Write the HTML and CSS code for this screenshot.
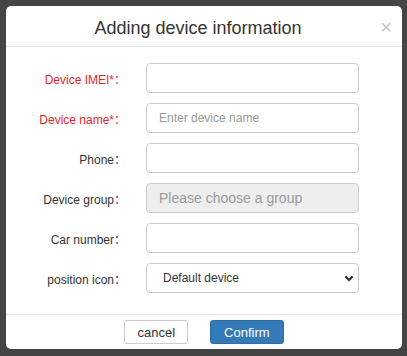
FILE: index.html
```
<!DOCTYPE html>
<html lang="en">
<head>
  <meta charset="UTF-8" />
  <title>Adding device information</title>
  <link rel="stylesheet" href="styles.css">
</head>
<body>
  <div class="modal">
    <div class="modal-header">
      <h4>Adding device information</h4>
      <span class="close">×</span>
    </div>
    <form class="modal-body">
      <div class="row">
        <label class="required">Device IMEI*：</label>
        <input type="text" />
      </div>
      <div class="row">
        <label class="required">Device name*：</label>
        <input type="text" placeholder="Enter device name" />
      </div>
      <div class="row">
        <label>Phone：</label>
        <input type="text" />
      </div>
      <div class="row">
        <label>Device group：</label>
        <input type="text" class="group" placeholder="Please choose a group" readonly />
      </div>
      <div class="row">
        <label>Car number：</label>
        <input type="text" />
      </div>
      <div class="row">
        <label>position icon：</label>
        <div class="select-wrap">
          <select>
            <option>Default device</option>
          </select>
          <svg class="chevron" width="10" height="7" viewBox="0 0 10 7">
            <path d="M1.4 1.4 L5 5 L8.6 1.4" fill="none" stroke="#333" stroke-width="2.2" />
          </svg>
        </div>
      </div>
    </form>
    <div class="modal-footer">
      <button class="btn">cancel</button>
      <button class="btn primary">Confirm</button>
    </div>
  </div>
</body>
</html>
```
FILE: styles.css
```
body {
  margin: 0;
  padding: 6px 5px 7px 6px;
  background-color: #444;
  font-family: "Liberation Sans", Arial, "Noto Sans CJK SC", sans-serif;
  color: #333;
}
.modal {
  background: white;
  border-radius: 5px;
  width: 396px;
  height: 343px;
  display: flex;
  flex-direction: column;
}
.modal-header {
  position: relative;
  height: 41px;
  box-sizing: border-box;
  padding: 5px 12px 0 0;
  border-bottom: 1px solid #e5e5e5;
  display: flex;
  align-items: center;
  justify-content: center;
}
h4 {
  margin: 0;
  font-size: 18px;
  font-weight: normal;
  color: #333;
}
.close {
  position: absolute;
  right: 10px;
  top: 10px;
  font-size: 20px;
  color: #c4c4c4;
}
.modal-body {
  flex: 1;
  padding: 16px 0 0 0;
  display: flex;
  flex-direction: column;
  gap: 10px;
}
.row {
  display: flex;
  align-items: center;
}
label {
  width: 120px;
  padding-right: 20px;
  text-align: right;
  font-size: 12px;
  color: #333;
}
.required {
  color: #e4262b;
}
input,
select {
  box-sizing: border-box;
  width: 213px;
  height: 30px;
  border: 1px solid #ccc;
  border-radius: 4px;
  padding: 0 12px;
  font-family: inherit;
  font-size: 12px;
  color: #333;
  background: white;
}
input::placeholder {
  color: #999;
}
.group {
  background-color: #eee;
  font-size: 14px;
}
.select-wrap {
  position: relative;
}
select {
  appearance: none;
  padding-left: 16px;
}
.chevron {
  position: absolute;
  right: 5px;
  top: 12px;
}
.modal-footer {
  height: 35px;
  border-top: 1px solid #e5e5e5;
  display: flex;
  justify-content: center;
  align-items: flex-start;
  gap: 22px;
  padding-top: 5px;
  box-sizing: border-box;
}
.btn {
  height: 24px;
  padding: 0 12px;
  font-family: inherit;
  font-size: 13px;
  border: 1px solid #ccc;
  border-radius: 3px;
  background: white;
  color: #333;
}
.btn.primary {
  background-color: #337ab7;
  border-color: #2e6da4;
  color: white;
  padding: 0 13px;
}
```
